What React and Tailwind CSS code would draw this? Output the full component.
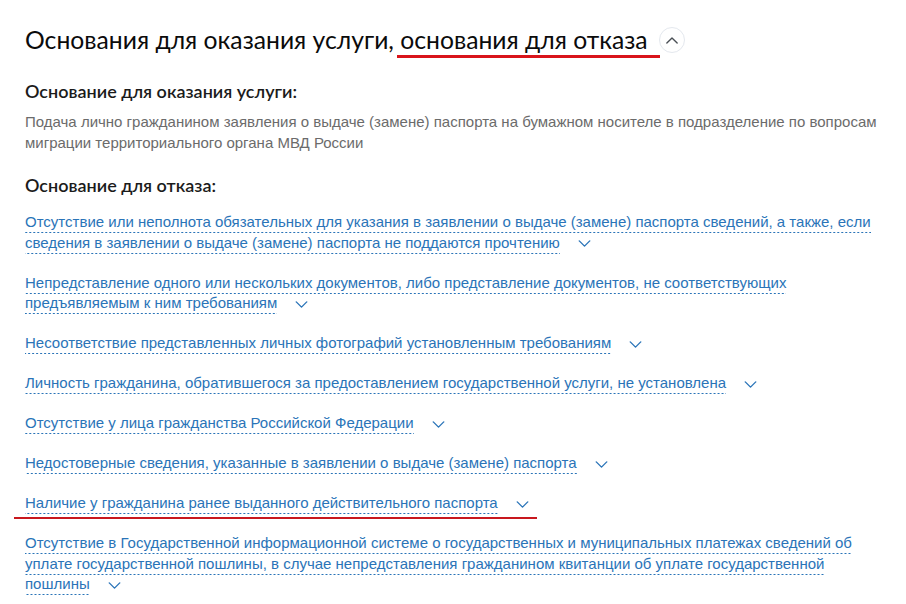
import React from 'react';

const reasons = [
    'Отсутствие или неполнота обязательных для указания в заявлении о выдаче (замене) паспорта сведений, а также, если сведения в заявлении о выдаче (замене) паспорта не поддаются прочтению',
    'Непредставление одного или нескольких документов, либо представление документов, не соответствующих предъявляемым к ним требованиям',
    'Несоответствие представленных личных фотографий установленным требованиям',
    'Личность гражданина, обратившегося за предоставлением государственной услуги, не установлена',
    'Отсутствие у лица гражданства Российской Федерации',
    'Недостоверные сведения, указанные в заявлении о выдаче (замене) паспорта',
    'Наличие у гражданина ранее выданного действительного паспорта',
    'Отсутствие в Государственной информационной системе о государственных и муниципальных платежах сведений об уплате государственной пошлины, в случае непредставления гражданином квитанции об уплате государственной пошлины',
];

const Chevron = ({ up = false, className = '' }) => (
    <svg viewBox="0 0 14 8" className={className} fill="none" stroke="currentColor" strokeWidth="1.6" strokeLinecap="round" strokeLinejoin="round">
        {up ? <path d="M1 7 L7 1 L13 7" /> : <path d="M1 1 L7 7 L13 1" />}
    </svg>
);

const Reason = ({ text }) => (
    <li className="mb-[19.5px] text-[15px] leading-[20.5px] text-[#2a74b8]">
        <span className="cursor-pointer pb-[3px] bg-[linear-gradient(to_right,#2a74b8_50%,transparent_50%)] bg-[length:4px_1px] bg-repeat-x bg-bottom">
            {text}
        </span>
        <Chevron className="inline-block ml-[18px] w-[13px] h-[7px] align-middle text-[#2a74b8]" />
    </li>
);

export default function App() {
    return (
        <div className="relative w-[906px] h-[604px] overflow-hidden bg-white pl-[25px] pr-[20px] pt-[25px] font-['Liberation_Sans',Arial,sans-serif]">
            {/* Section title */}
            <div className="flex items-center">
                <h2 className="font-['Lato','Noto_Sans',sans-serif] text-[24.7px] leading-[30px] text-[#0b0b0b]">
                    Основания для оказания услуги, основания для отказа
                </h2>
                <button className="ml-[11px] w-[26px] h-[26px] rounded-full border border-[#e4e8ee] flex items-center justify-center text-[#4a4f55]">
                    <Chevron up className="w-[12px] h-[7px]" />
                </button>
            </div>

            <h3 className="mt-[25px] font-['Lato','Noto_Sans',sans-serif] font-semibold text-[18px] leading-[22px] text-[#1b1b1b]">
                Основание для оказания услуги:
            </h3>
            <p className="mt-[9px] text-[15px] leading-[21px] text-[#6b6b6b]">
                Подача лично гражданином заявления о выдаче (замене) паспорта на бумажном носителе в подразделение по вопросам миграции территориального органа МВД России
            </p>

            <h3 className="mt-[21px] font-['Lato','Noto_Sans',sans-serif] font-semibold text-[18px] leading-[22px] text-[#1b1b1b]">
                Основание для отказа:
            </h3>
            <ul className="mt-[16px]">
                {reasons.map((r) => (
                    <Reason key={r} text={r} />
                ))}
            </ul>

            {/* red annotation marks */}
            <div className="absolute left-[397px] top-[55px] w-[263px] h-[3px] bg-[#d9141b]"></div>
            <div className="absolute left-[14px] top-[517px] w-[523px] h-[2px] bg-[#c8181e]"></div>
        </div>
    );
}
